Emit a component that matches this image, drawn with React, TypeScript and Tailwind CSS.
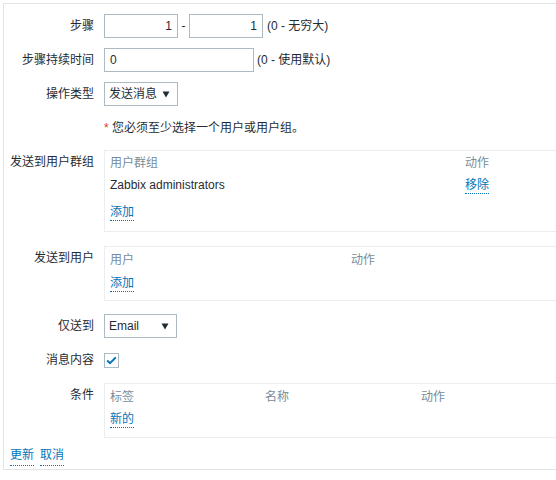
import React from "react";

const Link = ({ children, className = "" }: { children: React.ReactNode; className?: string }) => (
  <span className={"text-[#0275b8] border-b border-dotted border-[#0275b8] leading-[15px] inline-block " + className}>
    {children}
  </span>
);

const Caret = () => (
  <svg width="8" height="7" viewBox="0 0 8 7" className="shrink-0">
    <path d="M0.5 0.5 L7.5 0.5 L4 6.5 Z" fill="#1f2c33" />
  </svg>
);

const Label = ({ children, top = false }: { children: React.ReactNode; top?: boolean }) => (
  <div className={"w-[90px] shrink-0 text-right leading-[18px] " + (top ? "pt-[3px]" : "self-center")}>{children}</div>
);

export default function App() {
  return (
    <div className="w-[556px] h-[480px] overflow-hidden bg-white">
      <div className="font-[family-name:'Liberation_Sans','Noto_Sans_CJK_SC',sans-serif] text-[12px] leading-[18px] text-[#1f2c33] w-[700px] mt-[3px] ml-[3px] border border-[#dfe4e7] pt-[10px] pb-[3px]">
        {/* Row 1 */}
        <div className="flex h-[24px] gap-[10px]">
          <Label>步骤</Label>
          <div className="flex items-center">
            <div className="w-[74px] h-[24px] border border-[#acbbc2] flex items-center justify-end pr-[5px]">1</div>
            <span className="w-[11px] text-center">-</span>
            <div className="w-[74px] h-[24px] border border-[#acbbc2] flex items-center justify-end pr-[5px]">1</div>
            <span className="ml-[4px]">(0 - 无穷大)</span>
          </div>
        </div>
        {/* Row 2 */}
        <div className="flex h-[24px] gap-[10px] mt-[10px]">
          <Label>步骤持续时间</Label>
          <div className="flex items-center">
            <div className="w-[150px] h-[24px] border border-[#acbbc2] flex items-center pl-[5px]">0</div>
            <span className="ml-[3px]">(0 - 使用默认)</span>
          </div>
        </div>
        {/* Row 3 */}
        <div className="flex h-[24px] gap-[10px] mt-[10px]">
          <Label>操作类型</Label>
          <div className="w-[74px] h-[24px] border border-[#acbbc2] flex items-center justify-between pl-[4px] pr-[7px]">
            <span>发送消息</span>
            <Caret />
          </div>
        </div>
        {/* Note */}
        <div className="flex h-[24px] gap-[10px] mt-[10px]">
          <div className="w-[90px] shrink-0" />
          <div className="self-center">
            <span className="text-[#e33734]">*</span> 您必须至少选择一个用户或用户组。
          </div>
        </div>
        {/* Group box */}
        <div className="flex gap-[10px] mt-[10px]">
          <Label top>发送到用户群组</Label>
          <div className="w-[560px] h-[82px] border border-[#ebeef0] px-[5px] pt-[3px]">
            <div className="flex h-[18px] text-[#768d99]">
              <div className="w-[355px]">用户群组</div>
              <div>动作</div>
            </div>
            <div className="flex h-[18px] mt-[4px]">
              <div className="w-[355px]">Zabbix administrators</div>
              <div><Link>移除</Link></div>
            </div>
            <div className="h-[18px] mt-[9px]"><Link>添加</Link></div>
          </div>
        </div>
        {/* Users box */}
        <div className="flex gap-[10px] mt-[14px]">
          <Label top>发送到用户</Label>
          <div className="w-[560px] h-[55px] border border-[#ebeef0] px-[5px] pt-[4px]">
            <div className="flex h-[18px] text-[#768d99]">
              <div className="w-[241px]">用户</div>
              <div>动作</div>
            </div>
            <div className="h-[18px] mt-[5px]"><Link>添加</Link></div>
          </div>
        </div>
        {/* Email */}
        <div className="flex h-[24px] gap-[10px] mt-[13px]">
          <Label>仅送到</Label>
          <div className="w-[73px] h-[24px] border border-[#acbbc2] flex items-center justify-between pl-[4px] pr-[7px]">
            <span>Email</span>
            <Caret />
          </div>
        </div>
        {/* Checkbox */}
        <div className="flex h-[24px] gap-[10px] mt-[10px]">
          <Label>消息内容</Label>
          <div className="self-center w-[15px] h-[15px] border border-[#acbbc2] flex items-center justify-center">
            <svg width="11" height="9" viewBox="0 0 11 9">
              <path d="M1.2 4.6 L4 7.2 L9.8 1.4" fill="none" stroke="#0275b8" strokeWidth="2" />
            </svg>
          </div>
        </div>
        {/* Conditions box */}
        <div className="flex gap-[10px] mt-[11px]">
          <Label top>条件</Label>
          <div className="w-[560px] h-[55px] border border-[#ebeef0] px-[5px] pt-[4px]">
            <div className="flex h-[18px] text-[#768d99]">
              <div className="w-[155px]">标签</div>
              <div className="w-[156px]">名称</div>
              <div>动作</div>
            </div>
            <div className="h-[18px] mt-[4px]"><Link>新的</Link></div>
          </div>
        </div>
        {/* Buttons */}
        <div className="flex gap-[6px] h-[18px] mt-[10px] pl-[6px]">
          <Link>更新</Link>
          <Link>取消</Link>
        </div>
      </div>
    </div>
  );
}
